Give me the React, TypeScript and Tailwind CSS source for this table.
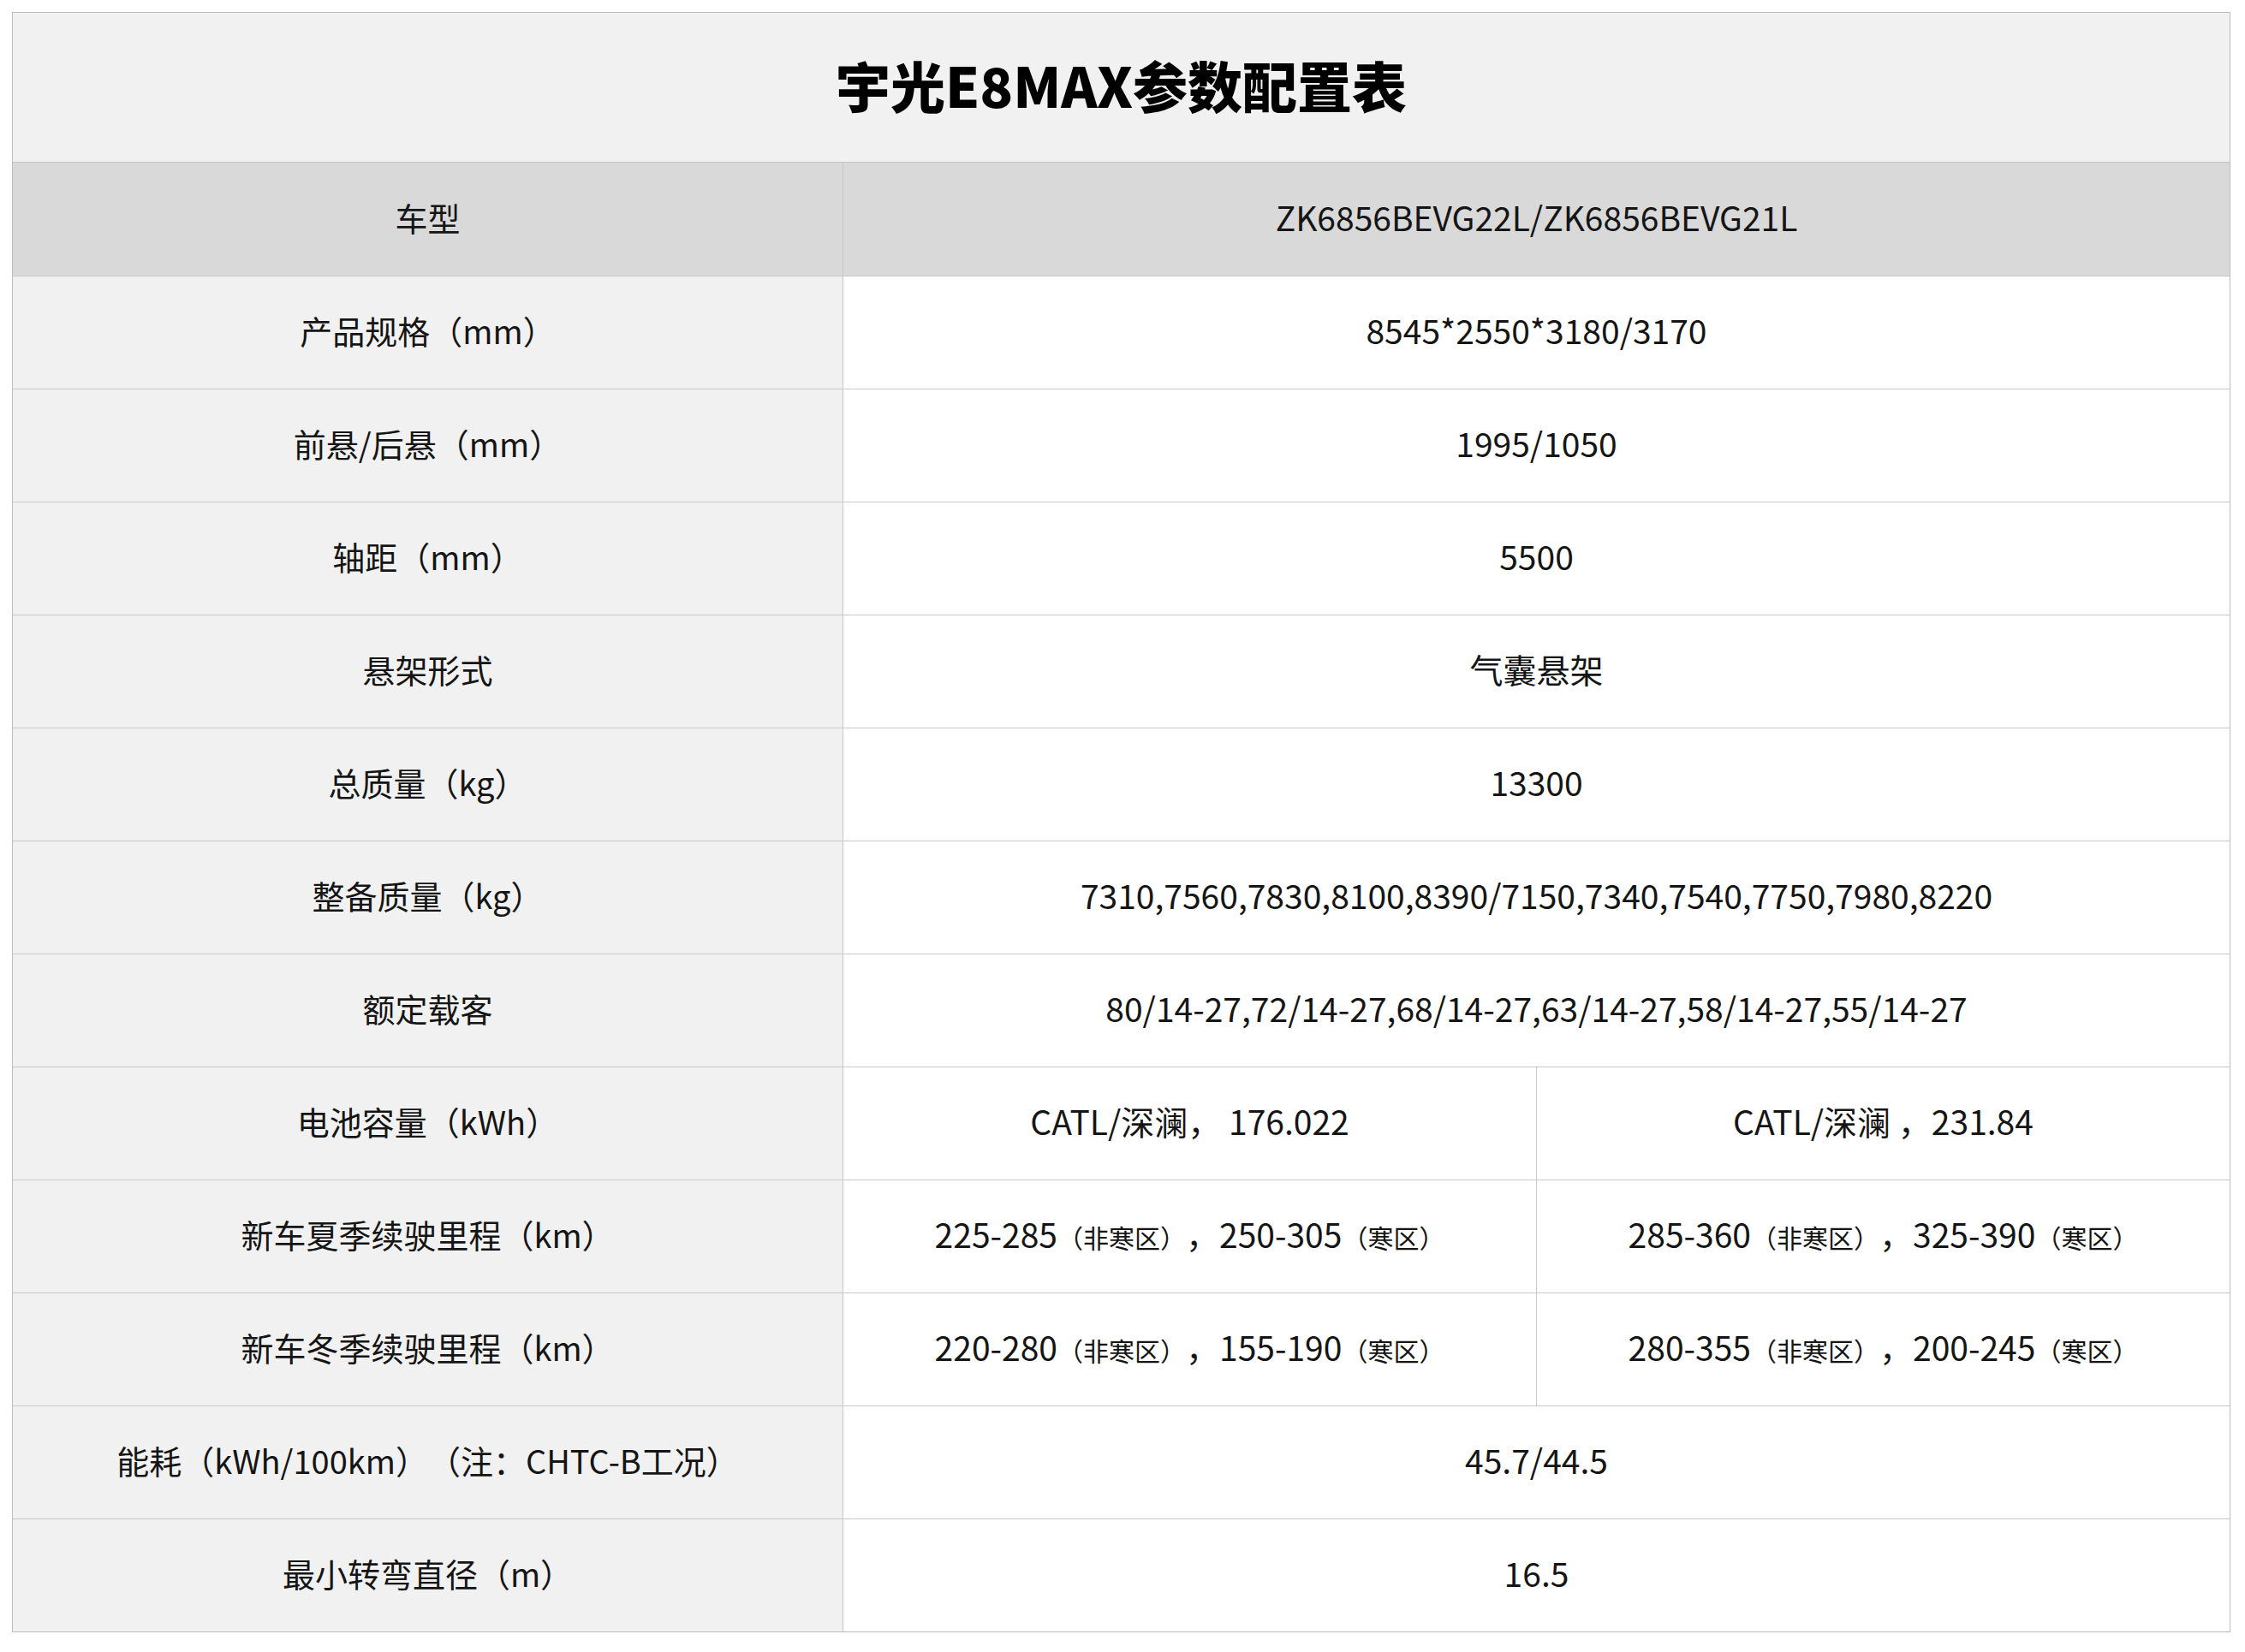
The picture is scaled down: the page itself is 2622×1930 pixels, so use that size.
import * as React from 'react';

type Row = {
  label: string;
  values: React.ReactNode[];
};

const Small = ({ children }: { children: React.ReactNode }) => (
  <span className="text-[30px]">{children}</span>
);

const rows: Row[] = [
  { label: '产品规格（mm）', values: ['8545*2550*3180/3170'] },
  { label: '前悬/后悬（mm）', values: ['1995/1050'] },
  { label: '轴距（mm）', values: ['5500'] },
  { label: '悬架形式', values: ['气囊悬架'] },
  { label: '总质量（kg）', values: ['13300'] },
  {
    label: '整备质量（kg）',
    values: ['7310,7560,7830,8100,8390/7150,7340,7540,7750,7980,8220'],
  },
  {
    label: '额定载客',
    values: ['80/14-27,72/14-27,68/14-27,63/14-27,58/14-27,55/14-27'],
  },
  { label: '电池容量（kWh）', values: ['CATL/深澜， 176.022', 'CATL/深澜 ，231.84'] },
  {
    label: '新车夏季续驶里程（km）',
    values: [
      <>
        225-285<Small>（非寒区）</Small>，250-305<Small>（寒区）</Small>
      </>,
      <>
        285-360<Small>（非寒区）</Small>，325-390<Small>（寒区）</Small>
      </>,
    ],
  },
  {
    label: '新车冬季续驶里程（km）',
    values: [
      <>
        220-280<Small>（非寒区）</Small>，155-190<Small>（寒区）</Small>
      </>,
      <>
        280-355<Small>（非寒区）</Small>，200-245<Small>（寒区）</Small>
      </>,
    ],
  },
  { label: '能耗（kWh/100km）（注：CHTC-B工况）', values: ['45.7/44.5'] },
  { label: '最小转弯直径（m）', values: ['16.5'] },
];

export default function App() {
  return (
    <div
      className="min-h-[1930px] w-[2622px] bg-white pl-[14px] pt-[14px] text-[#151515] [text-spacing-trim:space-all]"
      style={{ fontFamily: '"Noto Sans CJK SC", "Noto Sans", sans-serif' }}
    >
      <div className="flex w-[2591px] flex-col border border-[#bdbdbd]">
        {/* Title */}
        <div className="flex h-[175px] items-center justify-center border-b border-[#c4c4c4] bg-[#f1f1f1] pb-[8px]">
          <h1 className="text-[64px] font-black text-black">宇光E8MAX参数配置表</h1>
        </div>

        {/* Header */}
        <div className="flex h-[133px] border-b border-[#c8c8c8] bg-[#d9d9d9] text-[39px]">
          <div className="flex w-[970px] items-center justify-center border-r border-[#c8c8c8] pb-[6px] text-[38px]">
            <span>车型</span>
          </div>
          <div className="flex flex-1 items-center justify-center pb-[6px]">
            <span>ZK6856BEVG22L/ZK6856BEVG21L</span>
          </div>
        </div>

        {/* Body */}
        {rows.map((row, i) => (
          <div
            key={row.label}
            className={
              i === rows.length - 1
                ? 'flex h-[131px] text-[39px]'
                : 'flex h-[132px] border-b border-[#c8c8c8] text-[39px]'
            }
          >
            <div className="flex w-[970px] items-center justify-center border-r border-[#c8c8c8] bg-[#f1f1f1] pb-[6px] text-[38px]">
              <span>{row.label}</span>
            </div>
            {row.values.map((v, j) => (
              <div
                key={j}
                className={
                  j < row.values.length - 1
                    ? 'flex flex-1 items-center justify-center border-r border-[#c8c8c8] bg-white pb-[6px]'
                    : 'flex flex-1 items-center justify-center bg-white pb-[6px]'
                }
              >
                <span>{v}</span>
              </div>
            ))}
          </div>
        ))}
      </div>
    </div>
  );
}
